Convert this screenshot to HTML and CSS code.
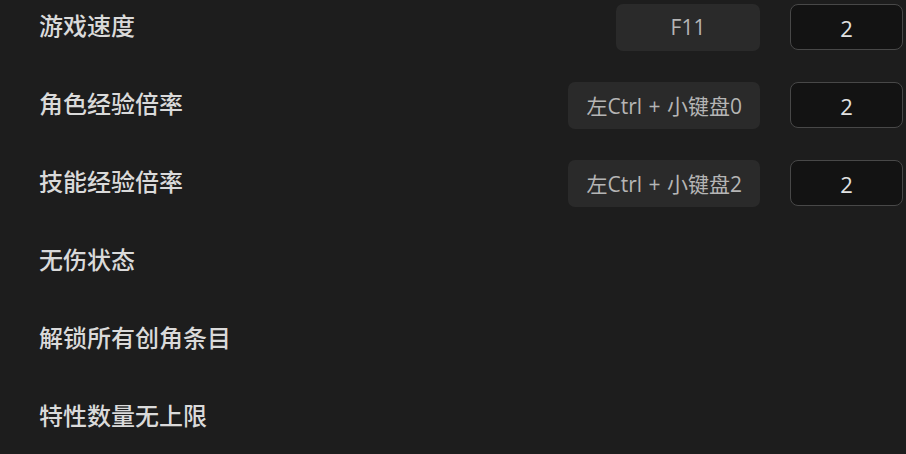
FILE: index.html
```html
<!DOCTYPE html>
<html lang="zh-CN">
<head>
<meta charset="utf-8">
<link rel="stylesheet" href="styles.css">
</head>
<body>
<div class="list">
  <div class="row">
    <div class="label">游戏速度</div>
    <div class="controls">
      <div class="hotkey hk-f11">F11</div>
      <div class="value">2</div>
    </div>
  </div>
  <div class="row">
    <div class="label">角色经验倍率</div>
    <div class="controls">
      <div class="hotkey">左Ctrl + 小键盘0</div>
      <div class="value">2</div>
    </div>
  </div>
  <div class="row">
    <div class="label">技能经验倍率</div>
    <div class="controls">
      <div class="hotkey">左Ctrl + 小键盘2</div>
      <div class="value">2</div>
    </div>
  </div>
  <div class="row">
    <div class="label">无伤状态</div>
  </div>
  <div class="row">
    <div class="label">解锁所有创角条目</div>
  </div>
  <div class="row">
    <div class="label">特性数量无上限</div>
  </div>
</div>
</body>
</html>
```
FILE: styles.css
```css
html, body {
  margin: 0;
  padding: 0;
  background: #1d1d1d;
  width: 906px;
  height: 454px;
  overflow: hidden;
}
.list {
  display: flex;
  flex-direction: column;
  gap: 30px;
  padding: 3px 3px 0 39px;
}
.row {
  display: flex;
  align-items: center;
  justify-content: space-between;
  min-height: 48px;
}
.label {
  font-family: "Noto Sans CJK SC", "Noto Sans", sans-serif;
  font-size: 24px;
  font-weight: 500;
  color: #dadada;
  margin-top: -6px;
}
.controls {
  display: flex;
  align-items: center;
  gap: 30px;
}
.hotkey {
  box-sizing: border-box;
  height: 47px;
  padding: 0 18px;
  background: #2a2a2a;
  border-radius: 7px;
  display: flex;
  align-items: center;
  justify-content: center;
  font-family: "Open Sans", "Noto Sans CJK SC", sans-serif;
  font-size: 21px;
  word-spacing: 1px;
  color: #b5b5b5;
}
.hk-f11 {
  width: 144px;
}
.value {
  box-sizing: border-box;
  width: 113px;
  height: 46px;
  border: 1.5px solid #484848;
  border-radius: 8px;
  background: #131313;
  display: flex;
  align-items: center;
  justify-content: center;
  padding-top: 2px;
  font-family: "Open Sans", sans-serif;
  font-size: 22px;
  color: #e2e2e2;
}
```
